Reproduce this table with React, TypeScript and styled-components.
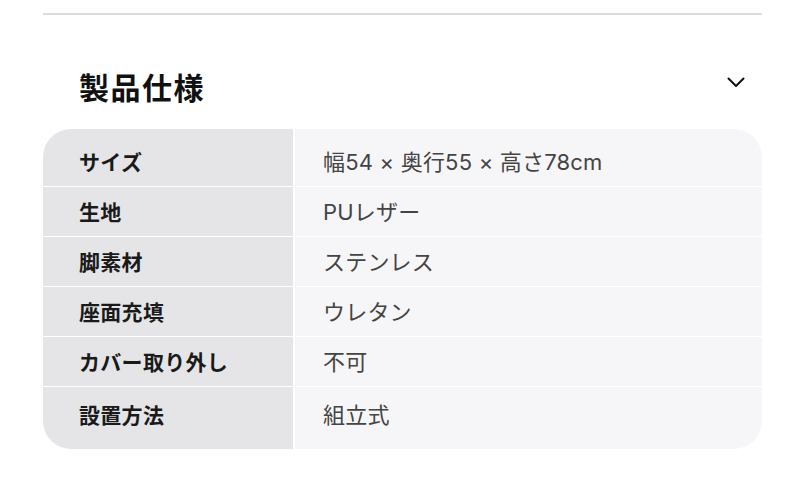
import styled, { createGlobalStyle } from 'styled-components';

const GlobalStyle = createGlobalStyle`
  body {
    margin: 0;
    background: #ffffff;
    font-family: "Noto Sans CJK JP", "Noto Sans", sans-serif;
  }
`;

const specs = [
  { label: 'サイズ', value: '幅54 × 奥行55 × 高さ78cm' },
  { label: '生地', value: 'PUレザー' },
  { label: '脚素材', value: 'ステンレス' },
  { label: '座面充填', value: 'ウレタン' },
  { label: 'カバー取り外し', value: '不可' },
  { label: '設置方法', value: '組立式' },
];

const App = () => {
  return (
    <Page>
      <GlobalStyle />
      <Divider />
      <Header>
        <Title>製品仕様</Title>
        <Toggle aria-label="閉じる">
          <svg width="18" height="11" viewBox="0 0 18 11" fill="none">
            <polyline points="1.5,1.5 9,9 16.5,1.5" stroke="#111" strokeWidth="2" strokeLinecap="round" strokeLinejoin="round" />
          </svg>
        </Toggle>
      </Header>

      <SpecTable>
        {specs.map((spec, i) => {
          const edge = i === 0 ? 'first' : i === specs.length - 1 ? 'last' : undefined;
          return [
            <LabelCell key={`l${i}`} $edge={edge}>{spec.label}</LabelCell>,
            <ValueCell key={`v${i}`} $edge={edge}>{spec.value}</ValueCell>,
          ];
        })}
      </SpecTable>
    </Page>
  );
};

const Page = styled.div`
  width: 719px;
  margin-left: 43px;
  padding-top: 13px;
`;

const Divider = styled.div`
  height: 2px;
  background: #dcdcdc;
`;

const Header = styled.div`
  display: flex;
  justify-content: space-between;
  align-items: flex-start;
  padding: 50px 0 22px 36px;
`;

const Title = styled.h2`
  margin: 0;
  font-size: 30px;
  line-height: 42px;
  font-weight: 700;
  letter-spacing: 1.5px;
  color: #111111;
`;

const Toggle = styled.button`
  margin: 12px 17px 0 0;
  padding: 0;
  border: none;
  background: none;
  display: flex;
  cursor: pointer;
`;

const SpecTable = styled.div`
  display: grid;
  grid-template-columns: 250px 1fr;
  column-gap: 2px;
  row-gap: 1px;
  background: #ffffff;
  border-radius: 28px;
  overflow: hidden;
`;

type Edge = 'first' | 'last' | undefined;

// first and last rows carry the extra room around the rounded corners
const Cell = styled.div<{ $edge?: Edge }>`
  display: flex;
  align-items: center;
  height: 49px;
  padding-top: ${p => (p.$edge === 'first' ? '8px' : p.$edge === 'last' ? '3px' : '0')};
  padding-bottom: ${p => (p.$edge === 'last' ? '10px' : '0')};
  font-size: 21px;
  line-height: 1;
`;

const LabelCell = styled(Cell)`
  background: #e5e5e7;
  padding-left: 36px;
  font-weight: 700;
  letter-spacing: 0.3px;
  color: #1a1a1a;
`;

const ValueCell = styled(Cell)`
  background: #f6f6f8;
  padding-left: 28px;
  font-family: Inter, "Noto Sans CJK JP", sans-serif;
  font-size: 22px;
  font-weight: 400;
  letter-spacing: 0.2px;
  color: #444444;
`;

export default App;
